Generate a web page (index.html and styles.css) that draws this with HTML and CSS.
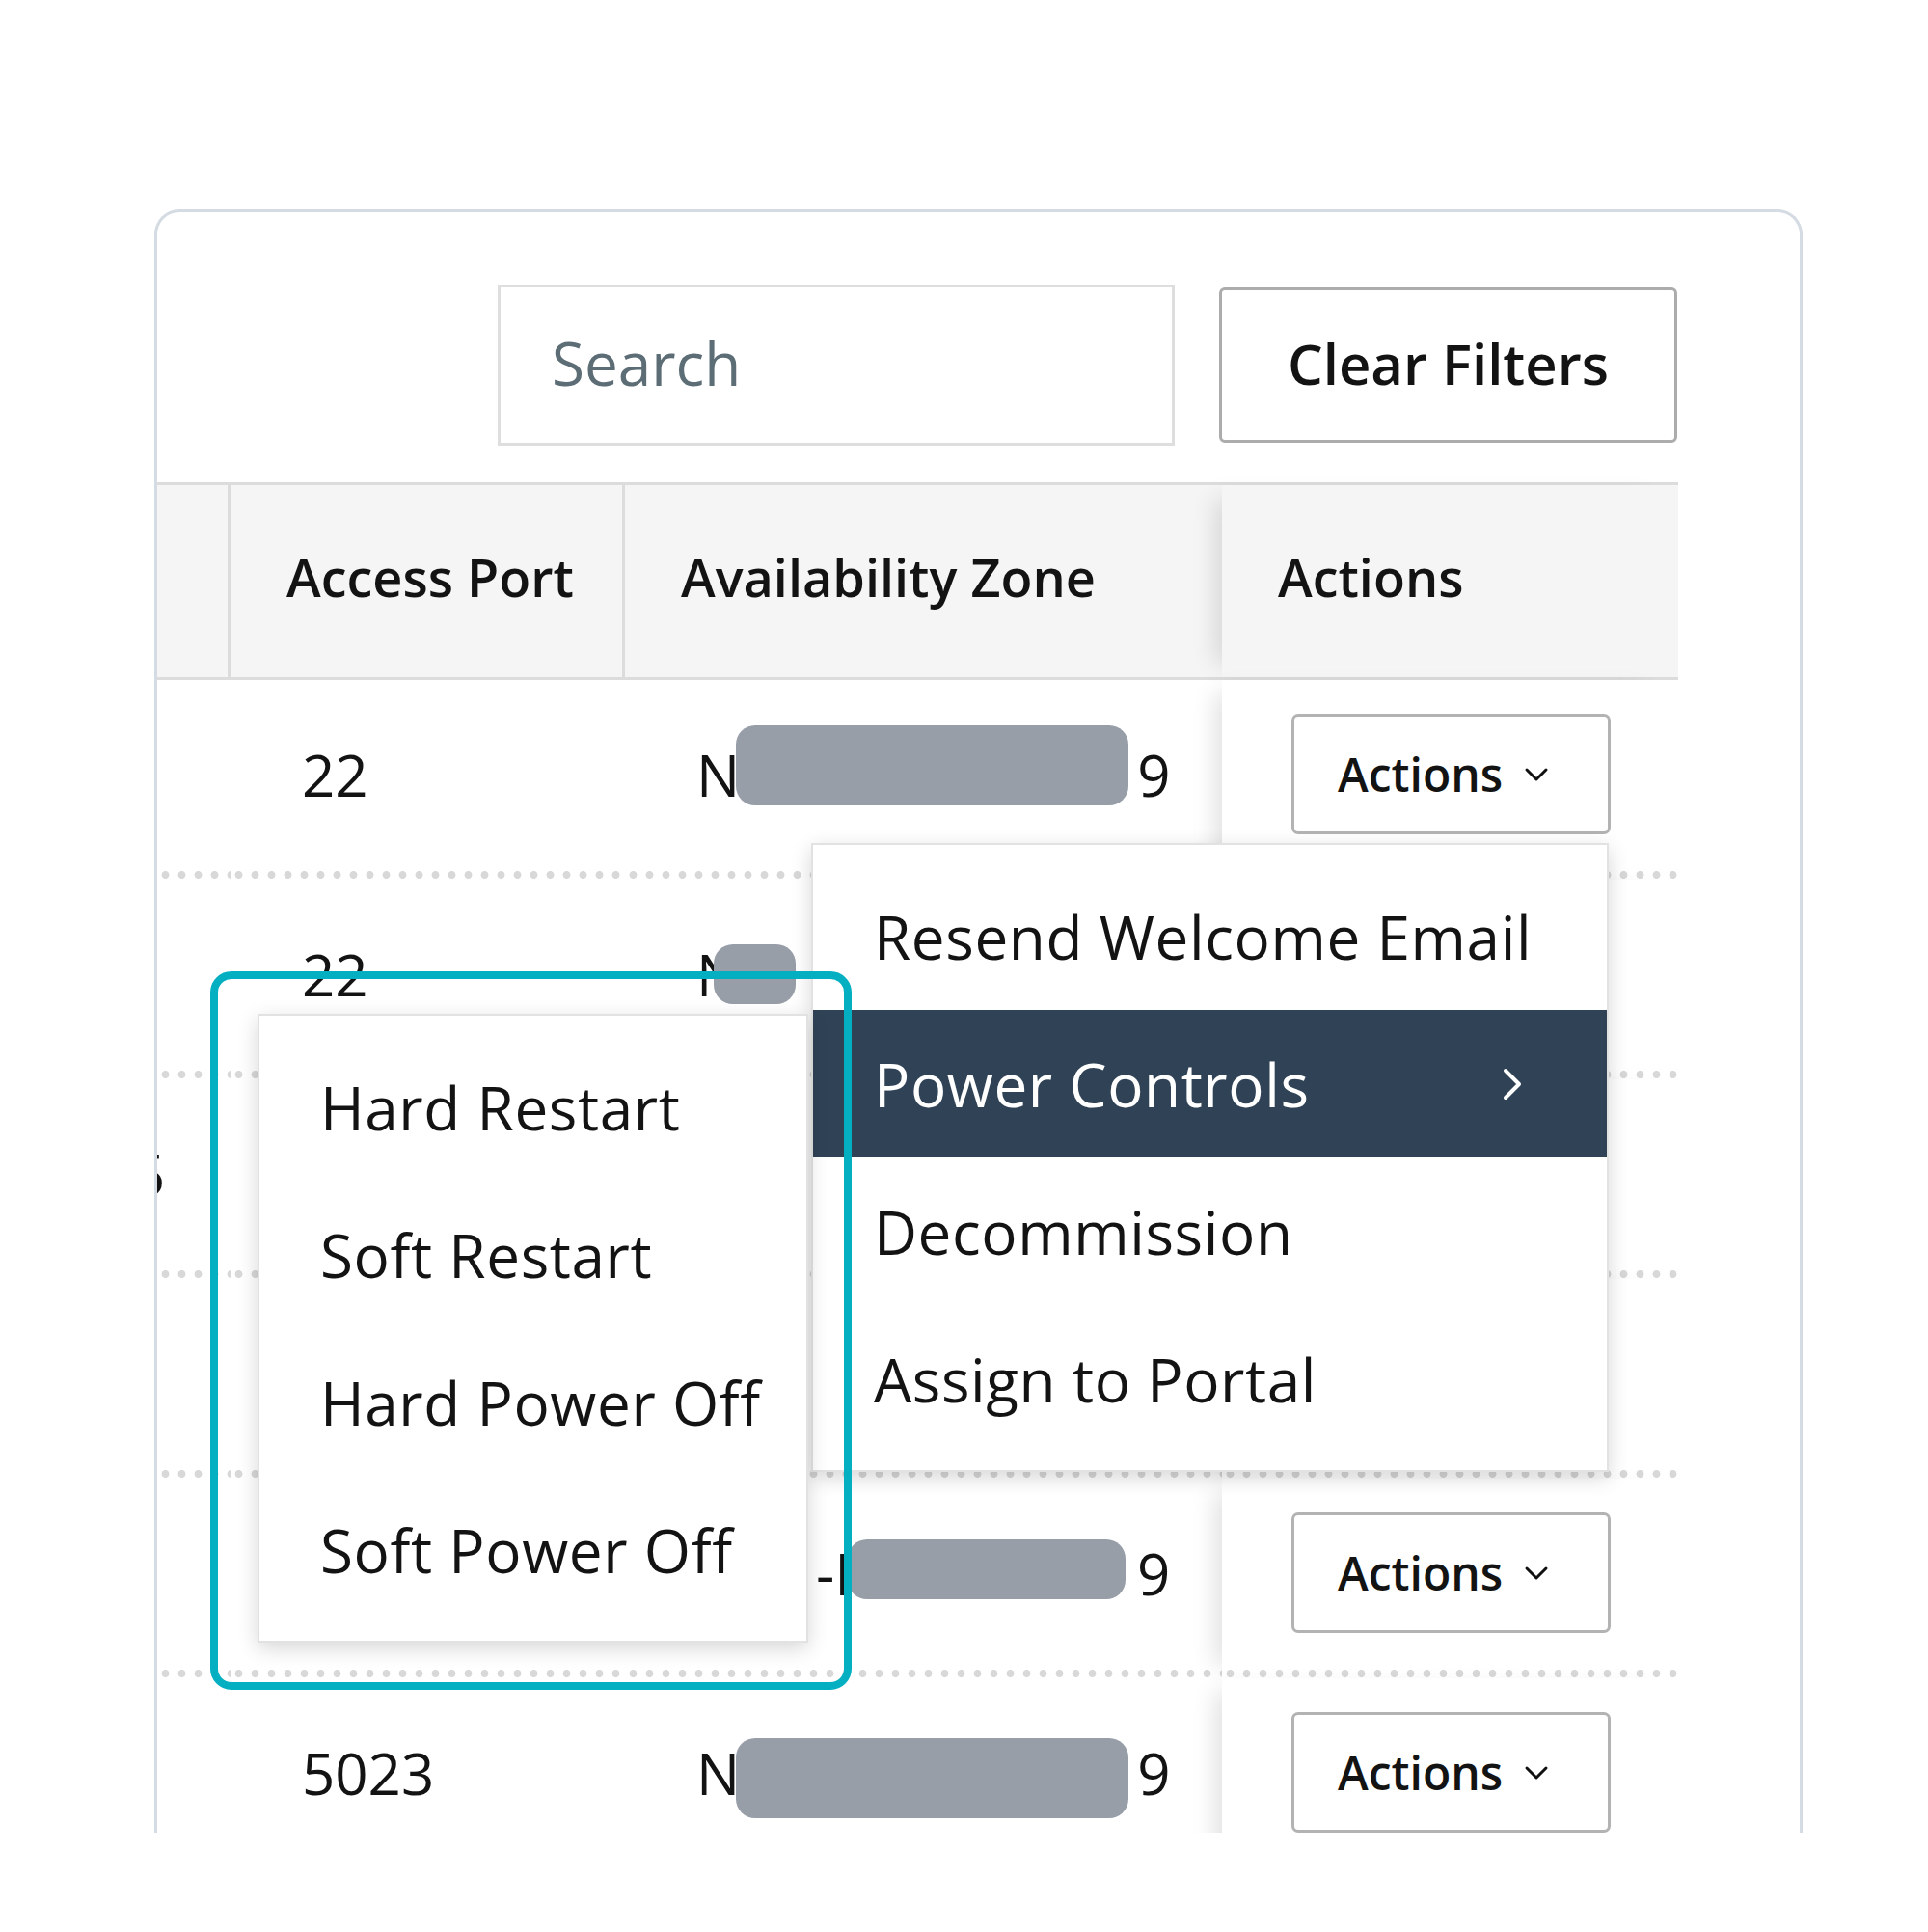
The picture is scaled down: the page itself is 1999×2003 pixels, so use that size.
FILE: index.html
```html
<!DOCTYPE html>
<html lang="en">

<head>
    <meta charset="UTF-8">
    <meta name="viewport" content="width=device-width, initial-scale=1.0">
    <title>Servers - Power Controls</title>
    <link rel="stylesheet" href="styles.css">
</head>

<body>
    <div class="page">
        <div class="card">
            <div class="toolbar">
                <div class="search">Search</div>
                <div class="clear-btn">Clear Filters</div>
            </div>

            <div class="table">
                <div class="thead">
                    <div class="th edge"></div>
                    <div class="th divided">Access Port</div>
                    <div class="th">Availability Zone</div>
                    <div class="th sticky">Actions</div>
                </div>

                <div class="row">
                    <div class="td edge"></div>
                    <div class="td">22</div>
                    <div class="td">N<span class="redact wide up"></span>9</div>
                    <div class="td sticky">
                        <div class="act-btn">Actions
                            <svg width="26" height="16" viewBox="0 0 26 16"><path d="M3 3 L13 13 L23 3" fill="none" stroke="#111" stroke-width="3" stroke-linecap="round" stroke-linejoin="round"/></svg>
                        </div>
                    </div>
                </div>

                <div class="row">
                    <div class="td edge"></div>
                    <div class="td">22</div>
                    <div class="td">N<span class="redact small"></span></div>
                    <div class="td sticky"></div>
                </div>

                <div class="row">
                    <div class="td edge"><span class="clipped">5</span></div>
                    <div class="td"></div>
                    <div class="td"></div>
                    <div class="td sticky"></div>
                </div>

                <div class="row">
                    <div class="td edge"></div>
                    <div class="td"></div>
                    <div class="td"></div>
                    <div class="td sticky"></div>
                </div>

                <div class="row">
                    <div class="td edge"></div>
                    <div class="td"></div>
                    <div class="td offset">-I<span class="redact mid"></span>9</div>
                    <div class="td sticky">
                        <div class="act-btn">Actions
                            <svg width="26" height="16" viewBox="0 0 26 16"><path d="M3 3 L13 13 L23 3" fill="none" stroke="#111" stroke-width="3" stroke-linecap="round" stroke-linejoin="round"/></svg>
                        </div>
                    </div>
                </div>

                <div class="row">
                    <div class="td edge"></div>
                    <div class="td">5023</div>
                    <div class="td">N<span class="redact wide down"></span>9</div>
                    <div class="td sticky">
                        <div class="act-btn">Actions
                            <svg width="26" height="16" viewBox="0 0 26 16"><path d="M3 3 L13 13 L23 3" fill="none" stroke="#111" stroke-width="3" stroke-linecap="round" stroke-linejoin="round"/></svg>
                        </div>
                    </div>
                </div>
            </div>
        </div>

        <!-- open actions menu -->
        <div class="menu">
            <div class="menu-item">Resend Welcome Email</div>
            <div class="menu-item active">Power Controls
                <svg width="22" height="36" viewBox="0 0 22 36"><path d="M4 4 L18 18 L4 32" fill="none" stroke="#fff" stroke-width="4" stroke-linecap="round" stroke-linejoin="round"/></svg>
            </div>
            <div class="menu-item">Decommission</div>
            <div class="menu-item">Assign to Portal</div>
        </div>

        <div class="menu submenu">
            <div class="menu-item">Hard Restart</div>
            <div class="menu-item">Soft Restart</div>
            <div class="menu-item">Hard Power Off</div>
            <div class="menu-item">Soft Power Off</div>
        </div>

        <div class="focus-ring"></div>
    </div>
</body>

</html>
```

FILE: styles.css
```css
body {
    font-family: "Open Sans", "DejaVu Sans", sans-serif;
    color: #131313;
    background: #fff;
    margin: 0;
}

.page {
    position: relative;
    width: 1999px;
    height: 2003px;
    padding: 217px 0 0 160px;
    box-sizing: border-box;
}

.card {
    width: 1709px;
    height: 1683px;
    box-sizing: border-box;
    border: 3px solid #d5dbe2;
    border-bottom: none;
    border-radius: 26px 26px 0 0;
    overflow: hidden;
    background: #fff;
}

.toolbar {
    display: flex;
    justify-content: flex-end;
    align-items: center;
    gap: 46px;
    padding: 75px 127px 0 0;
    margin-bottom: 38px;
}

.search {
    width: 702px;
    height: 167px;
    box-sizing: border-box;
    border: 3px solid #dedede;
    padding: 0 0 6px 53px;
    display: flex;
    align-items: center;
    font-size: 62px;
    color: #5d6d76;
}

.clear-btn {
    width: 475px;
    height: 161px;
    box-sizing: border-box;
    border: 3px solid #acacac;
    border-radius: 6px;
    padding-bottom: 4px;
    display: flex;
    align-items: center;
    justify-content: center;
    font-size: 58px;
    font-weight: 600;
}

.table {
    width: 1577px;
}

.thead,
.row {
    display: grid;
    grid-template-columns: 76px 409px 619px 473px;
}

.thead {
    height: 205px;
    box-sizing: border-box;
    border-top: 3px solid #dcdcdc;
    border-bottom: 3px solid #dcdcdc;
    background: #f5f5f5;
}

.th {
    display: flex;
    align-items: center;
    padding: 0 0 10px 58px;
    font-size: 54px;
    font-weight: 600;
    background: #f5f5f5;
}

.th.edge {
    padding: 0;
    border-right: 3px solid #dcdcdc;
}

.th.divided {
    border-right: 3px solid #dcdcdc;
}

.row {
    height: 207px;
}

.td {
    display: flex;
    align-items: center;
    padding: 0 0 12px 74px;
    font-size: 60px;
    white-space: nowrap;
    background: radial-gradient(circle, #d8d8d8 3.6px, transparent 4.3px) 0 100% / 17px 10px repeat-x;
}

.td.edge {
    padding-left: 0;
}

/* the rest of this cell sits under the open submenu */
.td.offset {
    padding-left: 198px;
}

.clipped {
    margin-left: -26px;
}

.sticky {
    position: relative;
    box-shadow: -20px 0 24px -14px rgba(0, 0, 0, 0.13);
}

.td.sticky {
    padding-left: 72px;
    background-color: #fff;
}

.redact {
    display: inline-block;
    background: #989ea8;
    border-radius: 20px;
}

.redact.wide {
    width: 407px;
    height: 83px;
    margin: 0 9px 0 -4px;
}

.redact.wide.up {
    margin-top: -18px;
}

.redact.wide.down {
    margin-top: 12px;
}

.redact.mid {
    width: 288px;
    height: 62px;
    margin: -8px 12px 0 -3px;
}

.redact.small {
    width: 85px;
    height: 62px;
    margin-left: -27px;
}

.act-btn {
    width: 331px;
    height: 125px;
    box-sizing: border-box;
    border: 3px solid #b3b3b3;
    border-radius: 7px;
    background: #fff;
    display: flex;
    align-items: center;
    gap: 22px;
    padding-left: 45px;
    font-size: 48px;
    font-weight: 600;
}

.menu {
    position: absolute;
    left: 841px;
    top: 874px;
    width: 827px;
    box-sizing: border-box;
    padding: 18px 0;
    background: #fff;
    border: 2px solid #e2e2e2;
    box-shadow: 0 6px 20px rgba(0, 0, 0, 0.16);
}

.submenu {
    left: 267px;
    top: 1051px;
    width: 571px;
}

.menu-item {
    height: 153px;
    display: flex;
    align-items: center;
    padding-left: 63px;
    font-size: 62px;
    letter-spacing: 0.6px;
    white-space: nowrap;
}

.menu-item.active {
    background: #304356;
    color: #fff;
    justify-content: space-between;
    padding-right: 87px;
}

.focus-ring {
    position: absolute;
    left: 218px;
    top: 1007px;
    width: 665px;
    height: 745px;
    box-sizing: border-box;
    border: 8px solid #05afc2;
    border-radius: 22px;
}
```
